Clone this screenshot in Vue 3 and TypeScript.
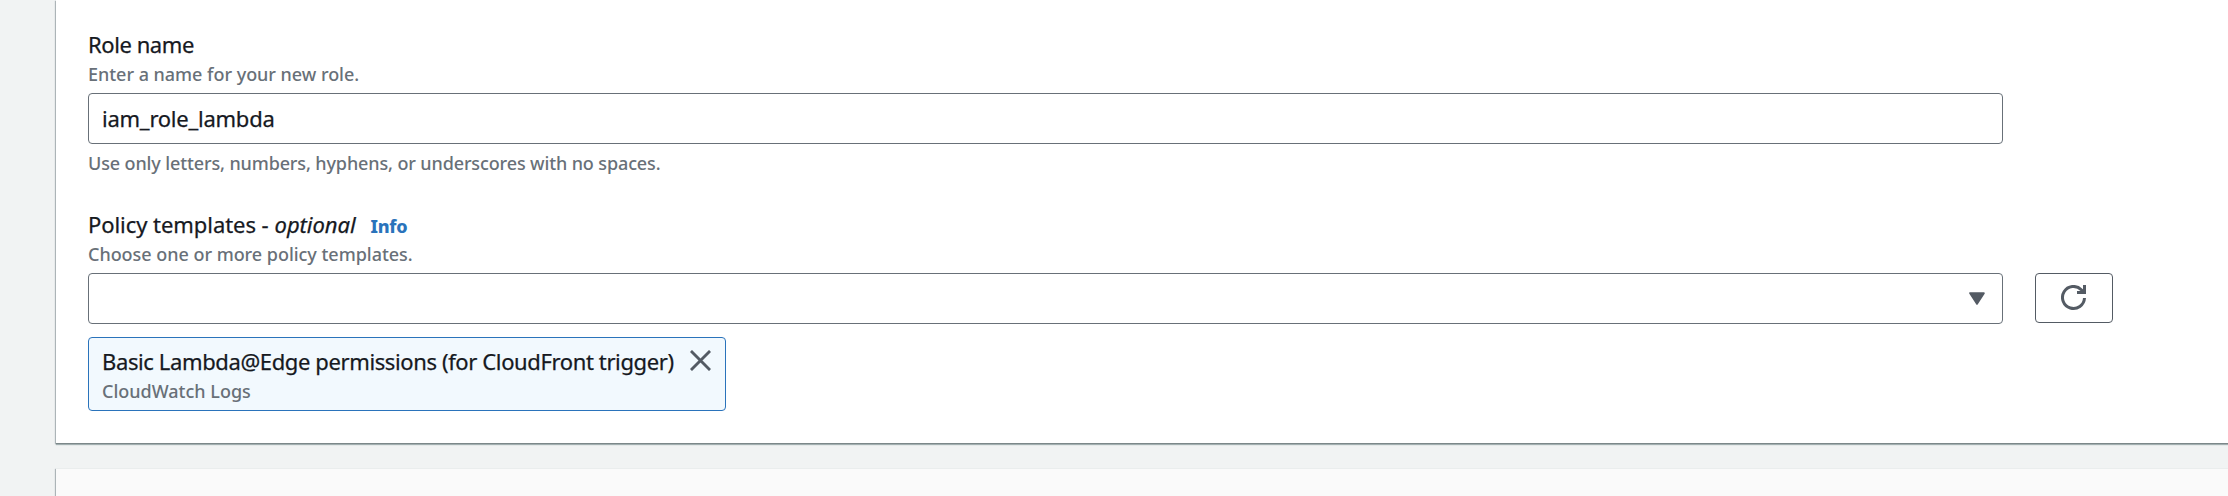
<script setup lang="ts">
import { ref } from 'vue'

const roleName = ref('iam_role_lambda')
</script>

<template>
  <main class="page">
    <section class="panel">
      <div class="field">
        <label class="label"><span class="label-text">Role name</span></label>
        <p class="description">Enter a name for your new role.</p>
        <div class="input"><span class="value">{{ roleName }}</span></div>
        <p class="constraint">Use only letters, numbers, hyphens, or underscores with no spaces.</p>
      </div>
      <div class="field second">
        <div class="label"><span class="policy-text">Policy templates -</span><em class="optional">optional</em><a class="info">Info</a></div>
        <p class="description">Choose one or more policy templates.</p>
        <div class="row">
          <div class="input select">
            <svg class="caret" width="16" height="13" viewBox="0 0 16 13"><path d="M1.2 1.2H14.8L8 11.8Z" fill="#545b64" stroke="#545b64" stroke-width="2" stroke-linejoin="round" /></svg>
          </div>
          <button class="refresh" aria-label="Refresh">
            <svg width="26" height="26" viewBox="0 0 26 26" fill="none" stroke="#545b64" stroke-width="3"><path d="M23.5 13A11 11 0 1 1 20.3 4.7L23.3 7.7M23.5 0V9M16 7.5H25" /></svg>
          </button>
        </div>
        <div class="token">
          <div class="token-text">
            <div class="token-title">Basic Lambda@Edge permissions (for CloudFront trigger)</div>
            <div class="token-description">CloudWatch Logs</div>
          </div>
          <svg class="close" width="21" height="21" viewBox="0 0 22 22" fill="none" stroke="#545b64" stroke-width="3"><path d="M1 1L21 21M21 1L1 21" /></svg>
        </div>
      </div>
    </section>
    <section class="panel next"></section>
  </main>
</template>

<style>
body { margin: 0; background: #f2f3f3; }
</style>
<style scoped>
.page { box-sizing: border-box; height: 496px; overflow: hidden; padding-left: 56px; background: #f1f3f3; font-family: "Noto Sans", "Open Sans", sans-serif; color: #16191f; }
.panel { box-sizing: border-box; height: 443px; padding: 26px 0 0 32px; background: #fff; box-shadow: 0 1px 1px #7c8789, 0 2px 1px #aab7b8, -1px 1px 1px #b9bec3; }
.label { display: flex; align-items: baseline; height: 36px; line-height: 36px; font-size: 22px; -webkit-text-stroke: 0.25px currentColor; }
.description, .constraint { margin: 0; height: 31px; line-height: 24px; font-size: 18px; font-weight: 500; letter-spacing: -0.03px; color: #687078; }
.input { box-sizing: border-box; width: 1915px; height: 51px; border: 1px solid #687078; border-radius: 4px; padding-left: 13px; line-height: 49px; font-size: 22px; -webkit-text-stroke: 0.25px currentColor; background: #fff; }
.constraint { height: 37px; padding-top: 7px; letter-spacing: -0.125px; }
.second { margin-top: 25px; }
.row { display: flex; gap: 32px; }
.select { display: flex; align-items: center; justify-content: flex-end; padding-right: 17px; }
.refresh { width: 78px; height: 50px; box-sizing: border-box; border: 1px solid #545b64; border-radius: 4px; background: #fff; padding: 0; display: flex; align-items: center; justify-content: center; }
.label-text { letter-spacing: -0.42px; }
.value { letter-spacing: -0.24px; }
.policy-text { letter-spacing: -0.06px; }
.optional { margin-left: 6px; letter-spacing: -0.05px; }
.info { margin-left: 15px; font-size: 18px; font-weight: 800; letter-spacing: -0.3px; color: #2a73bb; -webkit-text-stroke: 0; }
.token { box-sizing: border-box; width: 638px; height: 74px; margin-top: 13px; padding: 6px 14px 0 13px; border: 1px solid #2a73bb; border-radius: 4px; background: #f2f9fe; display: flex; justify-content: space-between; }
.token-title { line-height: 34px; font-size: 22px; -webkit-text-stroke: 0.25px currentColor; letter-spacing: -0.38px; white-space: nowrap; }
.token-description { line-height: 27px; font-size: 18px; font-weight: 500; color: #687078; }
.constraint { box-sizing: border-box; }
.close { margin-top: 6px; }
.next { height: 60px; margin-top: 25px; padding: 0; background: #fafafa; border-top: 1px solid #eaeded; }
</style>
